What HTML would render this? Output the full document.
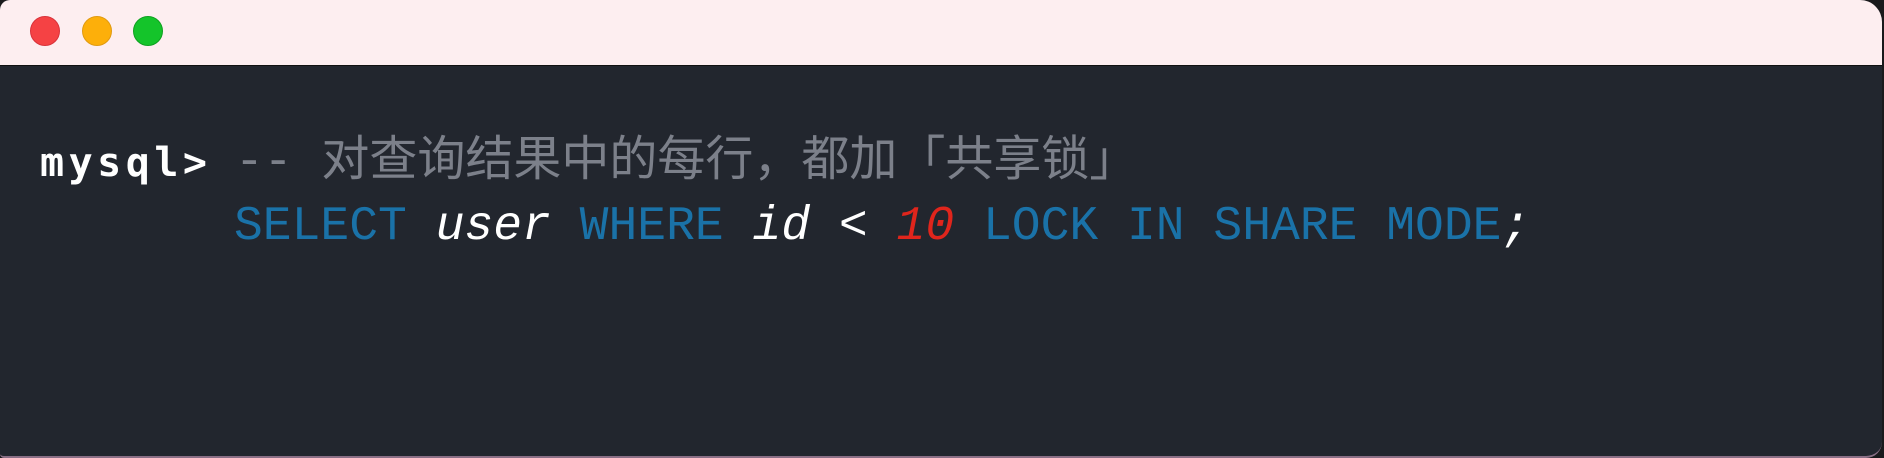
<!DOCTYPE html>
<html><head><meta charset="utf-8"><style>
html,body{margin:0;padding:0;width:1884px;height:458px;background:#1a1a1c;overflow:hidden}
.win{position:absolute;left:0;top:0;width:1882px;height:456px;border-radius:10px 22px 16px 4px;overflow:hidden;background:#22262e;border-bottom:2px solid #8a6f86}
.bar{position:absolute;left:0;top:0;width:100%;height:65px;background:#fdeef0;border-bottom:1px solid #111}
.dot{position:absolute;top:16px;width:30px;height:30px;border-radius:50%}
.line{position:absolute;left:40px;white-space:pre;font:48px/65px "Liberation Mono","Noto Sans CJK SC",monospace;color:#fff}
.p{font-family:"DejaVu Sans Mono","Liberation Mono",monospace;font-weight:bold;font-size:40px;letter-spacing:4.5px}
.c{color:#7c808a;font-size:48px}
.k{color:#1a72a8}
.i{font-style:italic;color:#fff}
.n{font-style:italic;color:#e0251c}
</style></head><body>
<div class="win">
<div class="bar">
<div class="dot" style="left:30px;background:#f54244;border:1px solid #d8323a;box-sizing:border-box"></div>
<div class="dot" style="left:82px;background:#fdaf0a;border:1px solid #e09a10;box-sizing:border-box"></div>
<div class="dot" style="left:133px;background:#14c42a;border:1px solid #0ea020;box-sizing:border-box"></div>
</div>
<div class="line" style="top:131px"><span class="p">mysql&gt;</span><span class="c" style="position:absolute;left:195px">-- 对查询结果中的每行，都加「共享锁」</span></div>
<div class="line" style="top:195px;left:234px"><span class="k">SELECT</span> <span class="i">user</span> <span class="k">WHERE</span> <span class="i">id</span> &lt; <span class="n">10</span> <span class="k">LOCK IN SHARE MODE</span><span class="i">;</span></div>
</div>
</body></html>
